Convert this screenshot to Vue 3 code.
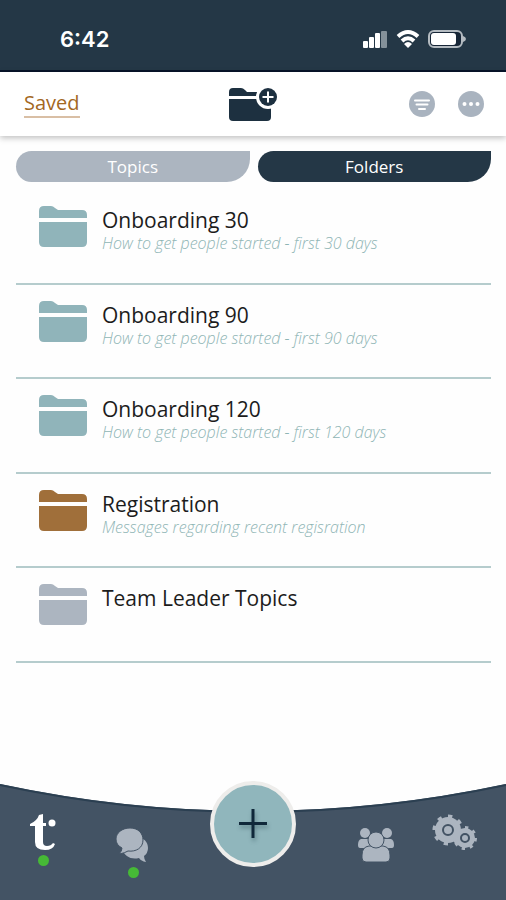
<template>
    <div class="app-screen">
        <div class="status-bar">
            <span class="status-time">6:42</span>
            <div class="status-icons">
                <svg class="signal-icon" viewBox="0 0 26 20" aria-hidden="true">
                    <rect x="1" y="12" width="5" height="7" rx="1" />
                    <rect x="7" y="8" width="5" height="11" rx="1" />
                    <rect x="13" y="4" width="5" height="15" rx="1" />
                    <rect class="muted" x="19" y="2" width="6" height="17" rx="1" />
                </svg>
                <svg class="wifi-icon" viewBox="0 0 24 20" aria-hidden="true">
                    <path d="M2 7.5Q12 -1.5 22 7.5" />
                    <path d="M6 12Q12 6.500 18 12" />
                    <path class="wifi-base" d="M8 15Q12 11 16 15L12 19Z" />
                </svg>
                <svg class="battery-icon" viewBox="0 0 38 20" aria-hidden="true">
                    <rect class="battery-case" x="1" y="2" width="33" height="16" rx="5" />
                    <rect class="battery-level" x="3" y="4" width="25" height="12" rx="3" />
                    <path class="battery-tip" d="M35 7Q38 8 38 10Q38 12 35 13Z" />
                </svg>
            </div>
        </div>

        <header class="app-header">
            <div class="header-side">
                <a href="#" class="saved-link">Saved</a>
            </div>
            <button type="button" class="icon-btn" aria-label="New folder">
                <svg class="new-folder-icon" viewBox="0 0 50 36" aria-hidden="true">
                    <path d="M0 10V6Q0 2 4 2H12Q14 2 16 4L18 6H38Q42 6 42 10Z" />
                    <path d="M0 13H42V31Q42 35 38 35H4Q0 35 0 31Z" />
                    <circle class="halo" cx="39" cy="11" r="12" />
                    <circle cx="39" cy="11" r="9" />
                    <path class="plus" d="M39 5.500V16.500M33.500 11H44.500" />
                </svg>
            </button>
            <div class="header-side header-actions">
                <button type="button" class="icon-btn" aria-label="Filter">
                    <svg class="round-icon" viewBox="0 0 26 26" aria-hidden="true">
                        <circle cx="13" cy="13" r="13" />
                        <path d="M6 9.500H20M7.500 13.500H18.500M10 18H16" />
                    </svg>
                </button>
                <button type="button" class="icon-btn" aria-label="More">
                    <svg class="round-icon" viewBox="0 0 26 26" aria-hidden="true">
                        <circle cx="13" cy="13" r="13" />
                        <path class="dots" d="M6.500 13H6.510M13 13H13.010M19.500 13H19.510" />
                    </svg>
                </button>
            </div>
        </header>

        <main class="content">
            <div class="tabs">
                <button v-for="tab in tabs" :key="tab" type="button" class="tab-btn"
                    :class="{ active: tab === activeTab }" @click="activeTab = tab">
                    {{ tab }}
                </button>
            </div>

            <ul class="folder-list">
                <li v-for="folder in folders" :key="folder.name" class="folder-row">
                    <svg class="folder-icon" :class="folder.color" viewBox="0 0 48 42" aria-hidden="true">
                        <path d="M0 12V5Q0 0 5 0H12Q14 0 16 2L19 4H43Q48 4 48 9V12Z" />
                        <path d="M0 16H48V36Q48 41 43 41H5Q0 41 0 36Z" />
                    </svg>
                    <div class="folder-text">
                        <h2 class="folder-name">{{ folder.name }}</h2>
                        <p v-if="folder.description" class="folder-description">{{ folder.description }}</p>
                    </div>
                </li>
            </ul>
        </main>

        <nav class="bottom-nav">
            <svg class="nav-background" viewBox="0 0 506 116" preserveAspectRatio="none" aria-hidden="true">
                <path class="nav-fill" d="M0 0Q253 54 506 0V116H0Z" />
                <path class="nav-edge" d="M0 1Q253 55 506 1" />
            </svg>
            <div class="nav-group nav-left">
                <button type="button" class="nav-btn" aria-label="Home">
                    <svg class="home-icon" viewBox="0 0 28 38" aria-hidden="true">
                        <path d="M1 10Q8 7 10 1L14 0V9H17V12H14V28Q14 32 18 32Q22 32 24 29L26 30Q24 36 16 36Q6 36 6 28V12H1Z" />
                        <circle cx="23" cy="9" r="3.500" />
                    </svg>
                    <span class="nav-dot"></span>
                </button>
                <button type="button" class="nav-btn nav-low" aria-label="Messages">
                    <svg class="chat-icon" viewBox="0 0 34 36" aria-hidden="true">
                        <path d="M19 9C28 9 32 14 32 20Q32 25 28 28Q28 31 30 34Q25 33 23 30C15 32 8 28 7 22Z" />
                        <path class="outlined" d="M14 0C22 0 27 5 27 12C27 20 20 24 12 23Q9 25 3 26Q6 23 6 20Q0 17 0 11C0 5 6 0 14 0Z" />
                    </svg>
                    <span class="nav-dot"></span>
                </button>
            </div>
            <button type="button" class="add-btn" aria-label="Add">
                <svg class="add-icon" viewBox="0 0 32 32" aria-hidden="true">
                    <path d="M16 1V30M2 15.500H30" />
                </svg>
            </button>
            <div class="nav-group nav-right">
                <button type="button" class="nav-btn nav-low" aria-label="People">
                    <svg class="people-icon" viewBox="0 0 38 36" aria-hidden="true">
                        <circle cx="8" cy="5" r="5" />
                        <circle cx="30" cy="5" r="5" />
                        <path d="M4 11H13V20H3Q1 20 1 17Q1 12 4 11ZM34 11H25V20H35Q37 20 37 17Q37 12 34 11Z" />
                        <path class="outlined" d="M12 18H26Q33 19 33 27V30Q33 34 29 34H9Q5 34 5 30V27Q5 19 12 18Z" />
                        <circle class="outlined" cx="19" cy="12" r="8" />
                    </svg>
                </button>
                <button type="button" class="nav-btn" aria-label="Settings">
                    <svg class="gear-icon" viewBox="0 0 46 38" aria-hidden="true">
                        <circle cx="16" cy="16" r="13" />
                        <circle class="teeth large" cx="16" cy="16" r="13" pathLength="80" />
                        <circle cx="33" cy="24" r="10" />
                        <circle class="teeth small" cx="33" cy="24" r="10" pathLength="80" />
                        <circle class="hole" cx="16" cy="16" r="5" />
                        <circle class="hole" cx="33" cy="24" r="4" />
                    </svg>
                </button>
            </div>
        </nav>
    </div>
</template>

<script setup>
import { ref } from 'vue'

const tabs = ['Topics', 'Folders']
const activeTab = ref('Folders')

const folders = [
    { name: 'Onboarding 30', description: 'How to get people started - first 30 days', color: 'teal' },
    { name: 'Onboarding 90', description: 'How to get people started - first 90 days', color: 'teal' },
    { name: 'Onboarding 120', description: 'How to get people started - first 120 days', color: 'teal' },
    { name: 'Registration', description: 'Messages regarding recent regisration', color: 'brown' },
    { name: 'Team Leader Topics', description: '', color: 'gray' },
]
</script>

<style>
body {
    margin: 0;
    background-color: #ffffff;
}
</style>

<style scoped>
.app-screen {
    min-height: 100vh;
    display: flex;
    flex-direction: column;
    background-color: #fefefe;
    font-family: "Open Sans", "Noto Sans", sans-serif;
}

button {
    padding: 0;
    border: none;
    background: none;
    font-family: inherit;
    cursor: pointer;
}

svg {
    display: block;
}

/* Status bar */
.status-bar {
    display: flex;
    justify-content: space-between;
    align-items: center;
    box-sizing: border-box;
    height: 72px;
    padding: 8px 40px 0 60px;
    background-color: #243746;
    border-bottom: 2px solid #07142a;
    color: #ffffff;
}

.status-time {
    font-family: Inter, sans-serif;
    font-size: 22px;
    font-weight: 600;
    line-height: 28px;
}

.status-icons {
    display: flex;
    gap: 8px;
}

.signal-icon {
    width: 26px;
    height: 20px;
    fill: #ffffff;
}

.signal-icon .muted {
    fill: #84919a;
}

.wifi-icon {
    width: 24px;
    height: 20px;
    fill: none;
    stroke: #ffffff;
    stroke-width: 4;
}

.wifi-icon .wifi-base {
    fill: #ffffff;
    stroke: none;
}

.battery-icon {
    width: 38px;
    height: 20px;
    fill: #ffffff;
}

.battery-icon .battery-case {
    fill: #172637;
    stroke: #b4bbc1;
    stroke-width: 2;
}

.battery-icon .battery-tip {
    fill: #b4bbc1;
}

/* Header */
.app-header {
    display: grid;
    grid-template-columns: 1fr 50px 1fr;
    align-items: center;
    height: 64px;
    padding: 0 22px 0 24px;
    background-color: #ffffff;
    box-shadow: 0 2px 6px rgba(0, 0, 0, 0.25);
}

.header-side {
    display: flex;
}

.header-actions {
    justify-content: flex-end;
    gap: 23px;
}

.saved-link {
    border-bottom: 2px solid #d9bfa5;
    color: #a3681f;
    font-size: 20px;
    line-height: 26px;
    text-decoration: none;
}

.new-folder-icon {
    width: 50px;
    height: 36px;
    fill: #1d3040;
}

.new-folder-icon .halo {
    fill: #ffffff;
}

.new-folder-icon .plus {
    stroke: #ffffff;
    stroke-width: 2;
}

.round-icon {
    width: 26px;
    height: 26px;
    fill: #a9b3bf;
    stroke-linecap: round;
}

.round-icon path {
    stroke: #ffffff;
    stroke-width: 2;
}

.round-icon .dots {
    stroke-width: 4;
}

/* Tabs */
.content {
    padding: 15px 15px 0 16px;
}

.tabs {
    display: grid;
    grid-template-columns: 1fr 1fr;
    gap: 8px;
}

.tab-btn {
    height: 31px;
    border-radius: 16px 0 24px 16px;
    background-color: #acb5c0;
    color: #ffffff;
    font-size: 17px;
    line-height: 24px;
}

.tab-btn.active {
    background-color: #243746;
}

/* Folders */
.folder-list {
    display: grid;
    grid-auto-rows: 1fr;
    min-height: 473px;
    margin: 8px 0 0;
    padding: 0;
    list-style: none;
}

.folder-row {
    display: flex;
    align-items: flex-start;
    gap: 15px;
    padding: 16px 23px 0;
    border-bottom: 2px solid #b5cccd;
}

.folder-icon {
    flex: none;
    width: 48px;
    height: 42px;
}

.folder-icon.teal {
    fill: #90b4ba;
}

.folder-icon.brown {
    fill: #a06f3a;
}

.folder-icon.gray {
    fill: #acb5c0;
}

.folder-name {
    margin: 0;
    color: #1c1c1c;
    font-size: 21px;
    font-weight: 400;
    line-height: 28px;
}

.folder-description {
    margin: 0;
    color: #8fb5b5;
    font-size: 16px;
    font-style: italic;
    font-weight: 300;
    line-height: 18px;
}

/* Bottom navigation */
.bottom-nav {
    position: relative;
    display: grid;
    grid-template-columns: 1fr 86px 1fr;
    align-items: start;
    min-height: 116px;
    margin-top: auto;
}

.nav-background {
    position: absolute;
    inset: 0;
    width: 100%;
    height: 100%;
}

.nav-fill {
    fill: #435364;
}

.nav-edge {
    fill: none;
    stroke: #2b3f51;
    stroke-width: 2;
}

.nav-group {
    position: relative;
    display: flex;
    justify-content: space-between;
    align-items: flex-start;
    padding-top: 30px;
}

.nav-left {
    padding-left: 29px;
    padding-right: 60px;
}

.nav-right {
    padding-left: 61px;
    padding-right: 28px;
}

.nav-btn {
    display: flex;
    flex-direction: column;
    align-items: center;
    gap: 3px;
    fill: #acb5c0;
}

.nav-low {
    margin-top: 14px;
}

.nav-dot {
    width: 11px;
    height: 11px;
    border-radius: 50%;
    background-color: #46b936;
}

.home-icon {
    width: 28px;
    height: 38px;
    fill: #ffffff;
}

.chat-icon {
    width: 34px;
    height: 36px;
}

.people-icon {
    width: 38px;
    height: 36px;
}

.nav-btn .outlined {
    stroke: #435364;
    stroke-width: 1;
}

.gear-icon {
    width: 46px;
    height: 38px;
}

.gear-icon .teeth {
    fill: none;
    stroke: #acb5c0;
    stroke-width: 5;
    stroke-dasharray: 4 6;
}

.gear-icon .small {
    stroke-width: 4;
}

.gear-icon .hole {
    stroke: #435364;
    stroke-width: 2;
}

.add-btn {
    position: relative;
    display: flex;
    justify-content: center;
    align-items: center;
    box-sizing: border-box;
    width: 86px;
    height: 86px;
    margin-top: -3px;
    border: 4px solid #eeedeb;
    border-radius: 50%;
    background-color: #90b6bc;
}

.add-icon {
    width: 32px;
    height: 32px;
    fill: none;
    stroke: #10283a;
    stroke-width: 3;
    filter: drop-shadow(1px 3px 2px rgba(30, 60, 70, 0.4));
}
</style>
